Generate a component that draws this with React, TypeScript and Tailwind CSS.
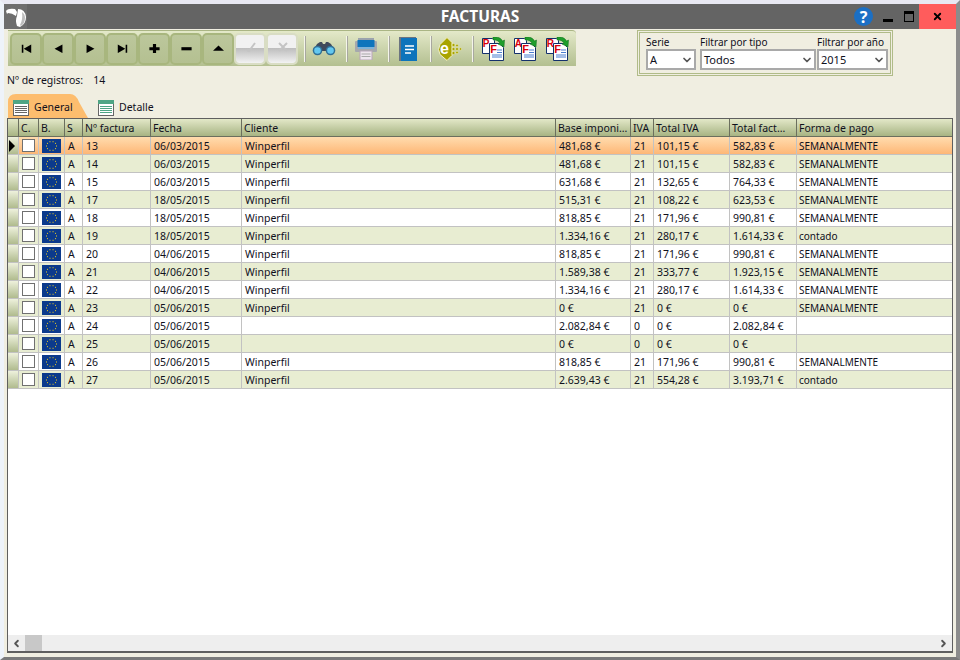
import { ReactNode } from "react";
import { ChevronDown, ChevronLeft, ChevronRight, X } from "lucide-react";

const rows = [
  { n: "13", f: "06/03/2015", c: "Winperfil", b: "481,68 €", i: "21", t: "101,15 €", tf: "582,83 €", p: "SEMANALMENTE" },
  { n: "14", f: "06/03/2015", c: "Winperfil", b: "481,68 €", i: "21", t: "101,15 €", tf: "582,83 €", p: "SEMANALMENTE" },
  { n: "15", f: "06/03/2015", c: "Winperfil", b: "631,68 €", i: "21", t: "132,65 €", tf: "764,33 €", p: "SEMANALMENTE" },
  { n: "17", f: "18/05/2015", c: "Winperfil", b: "515,31 €", i: "21", t: "108,22 €", tf: "623,53 €", p: "SEMANALMENTE" },
  { n: "18", f: "18/05/2015", c: "Winperfil", b: "818,85 €", i: "21", t: "171,96 €", tf: "990,81 €", p: "SEMANALMENTE" },
  { n: "19", f: "18/05/2015", c: "Winperfil", b: "1.334,16 €", i: "21", t: "280,17 €", tf: "1.614,33 €", p: "contado" },
  { n: "20", f: "04/06/2015", c: "Winperfil", b: "818,85 €", i: "21", t: "171,96 €", tf: "990,81 €", p: "SEMANALMENTE" },
  { n: "21", f: "04/06/2015", c: "Winperfil", b: "1.589,38 €", i: "21", t: "333,77 €", tf: "1.923,15 €", p: "SEMANALMENTE" },
  { n: "22", f: "04/06/2015", c: "Winperfil", b: "1.334,16 €", i: "21", t: "280,17 €", tf: "1.614,33 €", p: "SEMANALMENTE" },
  { n: "23", f: "05/06/2015", c: "Winperfil", b: "0 €", i: "21", t: "0 €", tf: "0 €", p: "SEMANALMENTE" },
  { n: "24", f: "05/06/2015", c: "", b: "2.082,84 €", i: "0", t: "0 €", tf: "2.082,84 €", p: "" },
  { n: "25", f: "05/06/2015", c: "", b: "0 €", i: "0", t: "0 €", tf: "0 €", p: "" },
  { n: "26", f: "05/06/2015", c: "Winperfil", b: "818,85 €", i: "21", t: "171,96 €", tf: "990,81 €", p: "SEMANALMENTE" },
  { n: "27", f: "05/06/2015", c: "Winperfil", b: "2.639,43 €", i: "21", t: "554,28 €", tf: "3.193,71 €", p: "contado" },
];

const gridCols =
  "grid grid-cols-[11px_20px_26px_18px_68px_91px_314px_75px_23px_76px_67px_1fr]";

function NavIcon({ kind }: { kind: string }) {
  return (
    <svg width="11" height="9.500" viewBox="0 0 14 12" fill="#000">
      {kind === "first" && <path d="M1 1h2v10H1zM3.500 6l9.500-5.500v11z" />}
      {kind === "prev" && <path d="M2 6l10-5.500v11z" />}
      {kind === "next" && <path d="M12 6L2 .5v11z" />}
      {kind === "last" && <path d="M11 1h2v10h-2zM10.500 6L1 .5v11z" />}
      {kind === "plus" && <path d="M5 0h4v4h4.500v4H9v4H5V8H.5V4H5z" />}
      {kind === "minus" && <path d="M.5 4h13v4H.5z" />}
      {kind === "up" && <path d="M7 2l7 6.500H0z" />}
    </svg>
  );
}

function Btn({ kind }: { kind: string }) {
  return (
    <div className="flex h-[32px] w-[32px] items-center justify-center rounded-[5px] border-2 border-[#a8b67e] bg-gradient-to-b from-[#bcc79c] to-[#b4c091]">
      <NavIcon kind={kind} />
    </div>
  );
}

function DisabledBtn({ kind }: { kind: string }) {
  return (
    <div className="relative h-[32px] w-[32px] overflow-hidden rounded-[5px] border-2 border-[#d9ddc4]">
      <div className="h-[13px] bg-[#f1f1f1]" />
      <div className="h-[15px] bg-gradient-to-b from-[#bdbdbd] to-[#f2f2f2]" />
      <svg className="absolute left-[8px] top-[6px]" width="14" height="12" viewBox="0 0 14 12" fill="none" stroke="#c4c4c4" strokeWidth="2">
        {kind === "ok" ? <path d="M3 9l2 1 6-8" /> : <path d="M3 2l8 8M11 2l-8 8" />}
      </svg>
    </div>
  );
}

function Sep() {
  return <div className="h-[26px] w-[1px] bg-[#f4f5ea] shadow-[1px_0_0_#a8a8a0]" />;
}

function Binoculars() {
  return (
    <svg width="24" height="15" viewBox="0 0 24 15" className="block">
      <path d="M5 3l3-2h2l1 2h2l1-2h2l3 2 4 7H1z" fill="#3f4a5c" />
      <circle cx="5.500" cy="9.500" r="4.800" fill="#2f6f96" />
      <circle cx="5.500" cy="9.500" r="3.300" fill="#63c8f0" />
      <circle cx="18.500" cy="9.500" r="4.800" fill="#2f6f96" />
      <circle cx="18.500" cy="9.500" r="3.300" fill="#63c8f0" />
    </svg>
  );
}

function PrinterIcon() {
  return (
    <svg width="22" height="22" viewBox="0 0 22 22" className="block">
      <rect x="3" y="0" width="16" height="3" fill="#9aa3ad" />
      <rect x="0" y="3" width="22" height="11" rx="1" fill="#a5a9ad" />
      <rect x="2.500" y="2" width="17" height="7" fill="#0f75bc" />
      <rect x="3" y="9" width="16" height="2" fill="#7fb3d8" />
      <rect x="5" y="13" width="12" height="9" fill="#efe6ee" stroke="#b9a6b9" />
      <path d="M6.500 16h9M6.500 18.500h9" stroke="#a9a9a9" />
    </svg>
  );
}

function BookIcon() {
  return (
    <svg width="18" height="24" viewBox="0 0 18 24" className="block">
      <rect x="0" y="0" width="17" height="24" fill="#6b7480" />
      <rect x="2" y="1" width="16" height="23" fill="#0d74bb" />
      <path d="M6 9h9M6 12.500h9M6 16h6" stroke="#fff" strokeWidth="1.500" />
    </svg>
  );
}

function EIcon() {
  return (
    <svg width="24" height="24" viewBox="0 0 24 24" className="block">
      <path d="M9 0.500l5 5v13l-5 5-7-6-1.500-5 1.500-5z" fill="#a8a400" stroke="#f1efc4" />
      <text x="2" y="17" fontFamily="'Liberation Sans', sans-serif" fontSize="16" fontWeight="700" fill="#fff">e</text>
      <g fill="#a8a400" stroke="#f1efc4" strokeWidth="0.500">
        <circle cx="15.500" cy="8" r="1.500" />
        <circle cx="19" cy="8.500" r="1.300" />
        <circle cx="15.500" cy="12" r="1.500" />
        <circle cx="19" cy="12" r="1.500" />
        <circle cx="22.500" cy="12" r="1.200" />
        <circle cx="15.500" cy="16" r="1.500" />
        <circle cx="19" cy="15.500" r="1.300" />
      </g>
    </svg>
  );
}

function PdfPair({ letter }: { letter: string }) {
  return (
    <svg width="24" height="24" viewBox="0 0 24 24" className="block">
      <path d="M0.500 1.500h10l2 2v13h-12z" fill="#fff" stroke="#14306b" />
      <text x="0.800" y="9.500" fontFamily="'Liberation Sans', sans-serif" fontSize="10" fontWeight="700" fill="#d8000c">{letter}</text>
      <path d="M7.500 6.500h10l4 4v13h-14z" fill="#fff" stroke="#14306b" />
      <text x="8.200" y="16" fontFamily="'Liberation Sans', sans-serif" fontSize="11" fontWeight="700" fill="#d8000c">F</text>
      <path d="M10 18h10M10 20h10M15 13h5M15 15.500h5" stroke="#4a7fd0" />
      <path d="M11 0c5-.5 8 1 9.500 4l2-1-.5 7-6-3 2-1c-1-2-4-3.500-7-3z" fill="#1f9e2c" stroke="#0d6a18" strokeWidth="0.500" />
    </svg>
  );
}

function EuFlag() {
  const stars = Array.from({ length: 10 }, (_, k) => {
    const a = (k / 10) * Math.PI * 2;
    return { x: 9.500 + Math.cos(a) * 5, y: 7 + Math.sin(a) * 4.500 };
  });
  return (
    <svg width="19" height="14" viewBox="0 0 19 14" className="block">
      <rect width="19" height="14" fill="#0b3a8c" />
      {stars.map((s, k) => (
        <rect key={k} x={s.x - 0.500} y={s.y - 0.500} width="1" height="1" fill="#f2d21e" />
      ))}
    </svg>
  );
}

function Logo() {
  return (
    <svg width="23" height="25" viewBox="0 0 23 25" className="block">
      <path d="M2 7Q4 4 11 5L13 8 12 12Q8 9 4 9L3 10z" fill="#fff" />
      <path d="M14 5Q21 5 22 13 22 20 16 23L13 22Q11 16 13 12z" fill="#fff" />
      <path d="M18 8Q21 10 21 14 21 19 17 22L16 21Q19 16 18 8z" fill="#bdbdbd" />
    </svg>
  );
}

function HelpIcon() {
  return (
    <div className="flex h-[19px] w-[19px] items-center justify-center rounded-full bg-[#1b6fc4] text-[16px] font-bold leading-none text-white">
      ?
    </div>
  );
}

function Combo({ width, value }: { width: string; value: string }) {
  return (
    <div className={`flex h-[21px] items-center justify-between border-2 border-[#a9a9a9] bg-white pl-[2px] pr-[1px] text-[11px] ${width}`}>
      <span className="pt-[1px]">{value}</span>
      <ChevronDown size={12} strokeWidth={3.500} className="text-[#555]" />
    </div>
  );
}

function HeadCell({ children }: { children?: ReactNode }) {
  return (
    <div className="flex items-center overflow-hidden whitespace-nowrap border-r border-[#6b6f5e] pl-[2px] pt-[2px] leading-none">
      {children}
    </div>
  );
}

function Cell({ children }: { children?: ReactNode }) {
  return (
    <div className="flex items-center overflow-hidden whitespace-nowrap border-r border-[#c2c2c2] pl-[3px] leading-none">
      {children}
    </div>
  );
}

function TextCell({ children }: { children?: ReactNode }) {
  return (
    <div className="flex items-center overflow-hidden whitespace-nowrap border-r border-[#c2c2c2] pl-[3px] pt-[1px] leading-none">
      {children}
    </div>
  );
}

function ListIcon({ lines }: { lines: string }) {
  return (
    <svg width="16" height="16" viewBox="0 0 16 16" className="block">
      <rect x="0.500" y="0.500" width="15" height="15" fill="#fff" stroke="#666" />
      <rect x="0" y="0" width="16" height="4" fill="#4fa585" />
      <path d="M2 6.500h12M2 8.500h12M2 10.500h12M2 12.500h12" stroke={lines} />
    </svg>
  );
}

export default function App() {
  return (
    <div
      className="h-[660px] w-[960px] overflow-hidden border-b-[3px] border-l-4 border-r-4 border-t-4 border-b-[#7a7a7a] border-l-[#eef3fa] border-r-[#8c8c8c] border-t-[#e8e8f2] bg-[#f0eee1] text-[10.5px] text-[#10101c]"
      style={{ fontFamily: "'Noto Sans', sans-serif" }}
    >
      {/* barra de titulo */}
      <div className="grid h-[25px] grid-cols-[1fr_auto_1fr] items-center bg-[#646464]">
        <div className="h-[25px] w-[23px] bg-[#6e6e6e]">
          <Logo />
        </div>
        <div className="text-center text-[15.5px] font-bold text-white">FACTURAS</div>
        <div className="flex items-center justify-end">
          <div className="mr-[10px]">
            <HelpIcon />
          </div>
          <div className="mr-[11px] mt-[7px] h-[3px] w-[10px] bg-black" />
          <div className="mr-[5px] h-[11px] w-[10px] border border-t-[3px] border-black" />
          <div className="flex h-[25px] w-[37px] items-center justify-center bg-[#ff5c5c]">
            <X size={11} strokeWidth={4} className="text-black" />
          </div>
        </div>
      </div>

      <div className="pl-[3px] pt-[1px]">
        <div className="flex h-[64px]">
          <div className="w-[569px]">
            {/* barra de herramientas */}
            <div className="ml-[1px] flex h-[36px] items-center rounded-tr-[4px] border-t border-[#aab584] bg-gradient-to-b from-[#e4e9c9] to-[#b3bf90] pl-[2px]">
              <Btn kind="first" />
              <Btn kind="prev" />
              <Btn kind="next" />
              <Btn kind="last" />
              <Btn kind="plus" />
              <Btn kind="minus" />
              <Btn kind="up" />
              <DisabledBtn kind="ok" />
              <DisabledBtn kind="no" />
              <div className="ml-[6px]"><Sep /></div>
              <div className="ml-[7px]"><Binoculars /></div>
              <div className="ml-[10px]"><Sep /></div>
              <div className="ml-[8px]"><PrinterIcon /></div>
              <div className="ml-[11px]"><Sep /></div>
              <div className="ml-[10px]"><BookIcon /></div>
              <div className="ml-[13px]"><Sep /></div>
              <div className="ml-[7px]"><EIcon /></div>
              <div className="ml-[10px]"><Sep /></div>
              <div className="ml-[9px] flex gap-[8px]">
                <PdfPair letter="P" />
                <PdfPair letter="A" />
                <PdfPair letter="R" />
              </div>
            </div>
            <div className="mt-[7px] flex items-center">
              <span>Nº de registros:</span>
              <span className="ml-[10px]">14</span>
            </div>
          </div>

          {/* filtros */}
          <div className="ml-[61px] flex h-[46px] w-[256px] items-end border-[3px] border-double border-[#b0bb88] pb-[3px] pl-[6px] text-[10px]">
            <div className="w-[54px]">
              <div className="h-[14px] leading-[14px]">Serie</div>
              <Combo width="w-[50px]" value="A" />
            </div>
            <div className="mr-[1px] w-[116px]">
              <div className="h-[14px] leading-[14px]">Filtrar por tipo</div>
              <Combo width="w-[116px]" value="Todos" />
            </div>
            <div className="w-[71px]">
              <div className="h-[14px] whitespace-nowrap leading-[14px]">Filtrar por año</div>
              <Combo width="w-[71px]" value="2015" />
            </div>
          </div>
        </div>

        {/* pestañas */}
        <div className="flex h-[24px] items-stretch pl-[1px]">
          <div className="flex w-[80px] items-center gap-[5px] bg-[#fdbd6e] pl-[5px] pt-[3px] [clip-path:path('M0_24V8Q0_0_8_0H62Q68_0_71_8L80_24Z')]">
            <ListIcon lines="#666" />
            <span>General</span>
          </div>
          <div className="ml-[10px] flex items-center gap-[5px] pt-[3px]">
            <ListIcon lines="#4fa585" />
            <span>Detalle</span>
          </div>
        </div>

        {/* rejilla */}
        <div className="flex h-[535px] w-[946px] flex-col border border-b-2 border-[#5f5f5f] bg-white">
          <div className={`${gridCols} h-[18px] shrink-0 border-b border-[#6b6f5e] bg-gradient-to-b from-[#e3e8c8] to-[#a7b483]`}>
            <HeadCell />
            <HeadCell>C.</HeadCell>
            <HeadCell>B.</HeadCell>
            <HeadCell>S</HeadCell>
            <HeadCell>Nº factura</HeadCell>
            <HeadCell>Fecha</HeadCell>
            <HeadCell>Cliente</HeadCell>
            <HeadCell>Base imponi...</HeadCell>
            <HeadCell>IVA</HeadCell>
            <HeadCell>Total IVA</HeadCell>
            <HeadCell>Total fact...</HeadCell>
            <div className="flex items-center pl-[2px] pt-[2px] leading-none">Forma de pago</div>
          </div>
          <div className="flex-1">
            {rows.map((r, idx) => (
              <div
                key={r.n}
                className={`${gridCols} h-[18px] border-b border-[#c2c2c2] ${
                  idx === 0
                    ? "bg-gradient-to-b from-[#ffdcae] to-[#fdb776]"
                    : idx % 2 === 1
                      ? "bg-[#e8edd2]"
                      : "bg-white"
                }`}
              >
                <div className="flex items-center border-r border-[#c2c2c2] bg-gradient-to-b from-[#eef1dc] to-[#b0bb8e]">
                  {idx === 0 && (
                    <svg width="7" height="12" viewBox="0 0 7 12" className="block">
                      <path d="M1 0l6 6-6 6z" fill="#000" />
                    </svg>
                  )}
                </div>
                <Cell>
                  <div className="h-[13px] w-[13px] border border-[#707070] bg-white" />
                </Cell>
                <Cell>
                  <EuFlag />
                </Cell>
                <TextCell>A</TextCell>
                <TextCell>{r.n}</TextCell>
                <TextCell>{r.f}</TextCell>
                <TextCell>{r.c}</TextCell>
                <TextCell>{r.b}</TextCell>
                <TextCell>{r.i}</TextCell>
                <TextCell>{r.t}</TextCell>
                <TextCell>{r.tf}</TextCell>
                <div className="flex items-center whitespace-nowrap pl-[2px] text-[10px] leading-none">{r.p}</div>
              </div>
            ))}
          </div>
          {/* barra de desplazamiento */}
          <div className="flex h-[16px] shrink-0 items-center bg-[#eeeeee]">
            <div className="flex w-[17px] justify-center">
              <ChevronLeft size={11} strokeWidth={4} className="text-[#555]" />
            </div>
            <div className="h-[16px] w-[17px] bg-[#c8c8c8]" />
            <div className="flex-1" />
            <div className="flex w-[17px] justify-center">
              <ChevronRight size={11} strokeWidth={4} className="text-[#555]" />
            </div>
          </div>
        </div>
      </div>
    </div>
  );
}
